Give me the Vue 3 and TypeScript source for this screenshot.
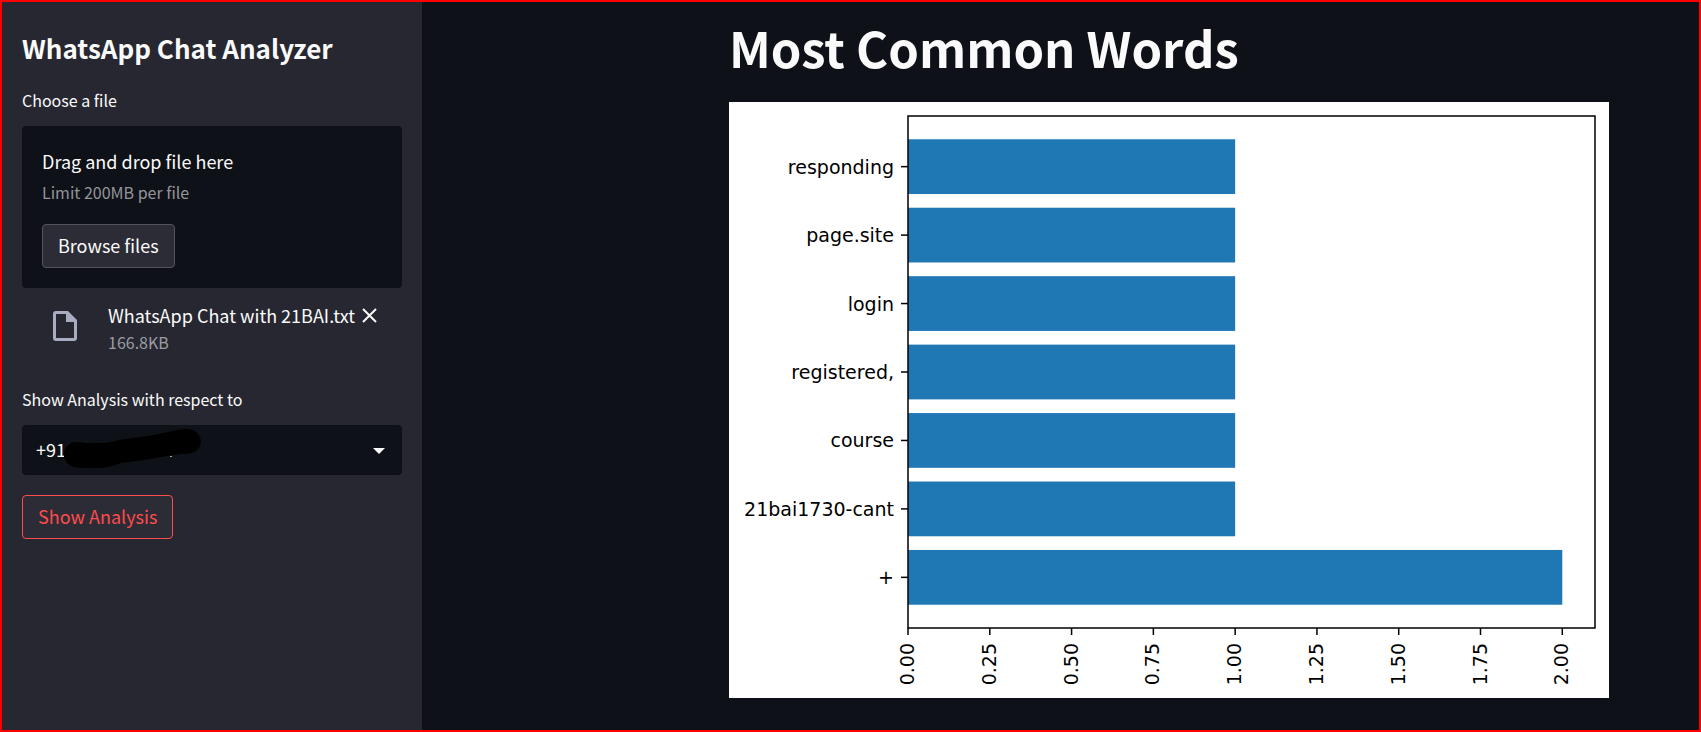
<script setup lang="ts">
import { ref } from 'vue'

interface WordCount {
  word: string
  count: number
}

const words: WordCount[] = [
  { word: 'responding', count: 1 },
  { word: 'page.site', count: 1 },
  { word: 'login', count: 1 },
  { word: 'registered,', count: 1 },
  { word: 'course', count: 1 },
  { word: '21bai1730-cant', count: 1 },
  { word: '+', count: 2 },
]
const ticks: number[] = [0, 0.25, 0.5, 0.75, 1, 1.25, 1.5, 1.75, 2]

// Plot frame inside the figure
const frame = { left: 179, top: 14, width: 687, height: 512 }
const bottom = frame.top + frame.height

const barShare = 0.8
const span = (words.length - 1 + barShare) * 1.1
const pitch = frame.height / span
const firstRow = frame.top + ((span - (words.length - 1)) / 2) * pitch
const unit = frame.width / 2.1

const rowY = (i: number): number => firstRow + i * pitch
const valueX = (v: number): number => frame.left + v * unit

const user = ref('+91')
</script>

<template>
  <div class="app">
    <aside class="sidebar">
      <h1 class="title">WhatsApp Chat Analyzer</h1>

      <label class="label" for="browse">Choose a file</label>
      <section class="dropzone">
        <span class="drop-text">Drag and drop file here</span>
        <small class="drop-limit">Limit 200MB per file</small>
        <button id="browse" class="btn" type="button">Browse files</button>
      </section>

      <div class="file">
        <svg class="file-icon" viewBox="0 0 24 30" aria-hidden="true">
          <path
            fill-rule="evenodd"
            d="M3 0H15L24 9V27Q24 30 21 30H3Q0 30 0 27V3Q0 0 3 0ZM3 3V27H21V11H13V3Z"
          />
        </svg>
        <div class="file-info">
          <span class="file-name">WhatsApp Chat with 21BAI.txt</span>
          <small class="file-size">166.8KB</small>
        </div>
        <button class="close" type="button" aria-label="Remove file">
          <svg viewBox="0 0 15 15" aria-hidden="true">
            <path d="M1 1L14 14M14 1L1 14" />
          </svg>
        </button>
      </div>

      <label class="label" for="user">Show Analysis with respect to</label>
      <div class="select-box">
        <select id="user" v-model="user" class="select">
          <option value="+91">+91</option>
        </select>
        <svg class="redaction" viewBox="0 0 138 40" aria-hidden="true">
          <path
            d="M12 13C17 13 18 14 23 14C39 14 45 14 55 11L90 6L109 2C117 0 125 -1 131 2C138 7 139 16 133 21C128 26 120 24 109 26L80 31L57 34C48 37 43 39 32 39H18C9 39 2 36 0 28C-1 20 4 13 12 13Z"
          />
          <rect class="residue" x="106" y="27" width="2" height="1" />
        </svg>
        <svg class="caret" viewBox="0 0 12 6" aria-hidden="true">
          <path d="M0 0H12L6 6Z" />
        </svg>
      </div>

      <button class="btn btn-active" type="button">Show Analysis</button>
    </aside>

    <main class="main">
      <div class="content">
        <h2 class="heading">Most Common Words</h2>
        <svg class="chart" viewBox="0 0 880 596" role="img" aria-label="Most common words">
          <rect class="figure" width="880" height="596" />
          <rect
            v-for="(w, i) in words"
            :key="w.word"
            class="bar"
            :x="frame.left"
            :y="rowY(i) - (pitch * barShare) / 2"
            :width="w.count * unit"
            :height="pitch * barShare"
          />
          <rect
            class="axis"
            :x="frame.left"
            :y="frame.top"
            :width="frame.width"
            :height="frame.height"
          />
          <g v-for="(w, i) in words" :key="'y' + w.word">
            <line
              class="axis"
              :x1="frame.left - 7"
              :x2="frame.left"
              :y1="rowY(i)"
              :y2="rowY(i)"
            />
            <text class="tick" text-anchor="end" :x="frame.left - 14" :y="rowY(i) + 7">
              {{ w.word }}
            </text>
          </g>
          <g v-for="t in ticks" :key="t">
            <line class="axis" :x1="valueX(t)" :x2="valueX(t)" :y1="bottom" :y2="bottom + 7" />
            <text
              class="tick"
              text-anchor="end"
              :transform="`translate(${valueX(t) + 6} ${bottom + 15}) rotate(-90)`"
            >
              {{ t.toFixed(2) }}
            </text>
          </g>
        </svg>
      </div>
    </main>
  </div>
</template>

<style>
body {
  margin: 0;
  background: #0e1117;
}
</style>

<style scoped>
.app {
  box-sizing: border-box;
  display: flex;
  min-height: 100vh;
  border: 2px solid #ff0000;
  background: #0e1117;
  color: #fafafa;
  font-family: 'Source Sans Pro', 'Noto Sans CJK SC', sans-serif;
  font-size: 18px;
}

.sidebar {
  box-sizing: border-box;
  flex: 0 0 420px;
  display: flex;
  flex-direction: column;
  padding: 28px 20px 20px;
  background: #262730;
}

.title {
  margin: 0 0 22px;
  font-size: 26px;
  font-weight: 600;
  line-height: 36px;
}

.label {
  margin-bottom: 14px;
  font-size: 16px;
  line-height: 24px;
}

.dropzone {
  display: flex;
  flex-direction: column;
  align-items: flex-start;
  padding: 20px;
  border-radius: 4px;
  background: #0e1117;
}

.drop-text {
  line-height: 30px;
}

.drop-limit {
  margin-bottom: 16px;
  color: #94959a;
  font-size: 16px;
  line-height: 32px;
}

.btn {
  align-self: flex-start;
  height: 44px;
  padding: 0 15px 2px;
  border: 1px solid #53545c;
  border-radius: 4px;
  background: #2b2c36;
  color: inherit;
  font: inherit;
  line-height: 30px;
}

.btn-active {
  border-color: #ff4b4b;
  color: #ff4b4b;
}

.file {
  display: flex;
  align-items: flex-start;
  margin-bottom: 33px;
  padding: 12px 25px 0 31px;
}

.file-icon {
  flex: none;
  width: 24px;
  height: 30px;
  margin: 11px 31px 0 0;
  fill: #a9adc1;
}

.file-info {
  flex: 1;
  display: flex;
  flex-direction: column;
  white-space: nowrap;
}

.file-name {
  line-height: 30px;
}

.file-size {
  color: #9c9da3;
  font-size: 16px;
  line-height: 24px;
}

.close {
  display: flex;
  flex: none;
  margin-top: 8px;
  padding: 0;
  border: 0;
  background: none;
}

.close svg {
  width: 15px;
  height: 15px;
  fill: none;
  stroke: #fafafa;
  stroke-width: 2;
}

.select-box {
  position: relative;
  height: 50px;
  margin-bottom: 20px;
}

.select {
  width: 100%;
  height: 100%;
  padding: 0 14px 2px;
  border: 0;
  border-radius: 4px;
  appearance: none;
  background: #0e1117;
  color: inherit;
  font: inherit;
}

.redaction {
  position: absolute;
  top: 4px;
  left: 42px;
  width: 138px;
  height: 40px;
  overflow: visible;
  fill: #000000;
  pointer-events: none;
}

.residue {
  fill: #b9a58f;
}

.caret {
  position: absolute;
  top: 23px;
  right: 17px;
  width: 12px;
  height: 6px;
  fill: #fafafa;
  pointer-events: none;
}

.main {
  flex: 1;
  display: flex;
  justify-content: flex-end;
  min-width: 0;
  padding: 12px 90px 0 20px;
}

.content {
  flex: 0 1 880px;
  min-width: 0;
}

.heading {
  margin: 0 0 22px;
  font-size: 49px;
  font-weight: 700;
  line-height: 66px;
}

.chart {
  display: block;
  width: 100%;
}

.figure {
  fill: #ffffff;
}

.bar {
  fill: #1f77b4;
}

.axis {
  fill: none;
  stroke: #000000;
  stroke-width: 1.5;
}

.tick {
  fill: #000000;
  font-family: 'DejaVu Sans', sans-serif;
  font-size: 19px;
}
</style>
